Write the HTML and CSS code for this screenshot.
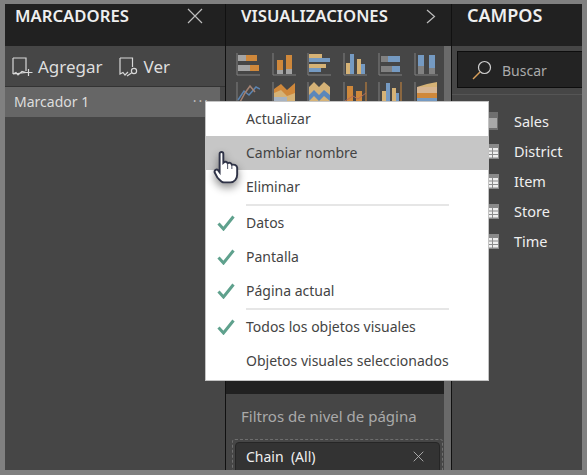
FILE: index.html
```html
<!DOCTYPE html>
<html>
<head>
    <meta charset="UTF-8">
    <title>Marcadores</title>
    <link rel="stylesheet" href="styles.css">
</head>
<body>
    <!-- shared icons -->
    <svg class="defs" width="0" height="0">
        <symbol id="check" viewBox="0 0 18 16">
            <path d="M1.5 8.5 L6.5 14 L16.5 1.5" fill="none" stroke="#5fa18d" stroke-width="3"/>
        </symbol>
        <symbol id="table" viewBox="0 0 12 15">
            <rect width="12" height="15" fill="#8a8a8a"/>
            <path d="M1 4h4v2.5H1zM6 4h5v2.5H6zM1 7.5h4V10H1zM6 7.5h5V10H6zM1 11h4v2.5H1zM6 11h5v2.5H6z" fill="#eee"/>
        </symbol>
        <symbol id="close" viewBox="0 0 16 16">
            <path d="M1 1 L15 15 M15 1 L1 15" fill="none" stroke="#bdbdbd" stroke-width="1.2"/>
        </symbol>
    </svg>

    <div class="frame">
        <!-- Marcadores -->
        <section class="panel marks">
            <header class="head">
                <h2>MARCADORES</h2>
                <svg class="head-close" width="16" height="16"><use href="#close"/></svg>
            </header>
            <div class="mark-tools">
                <span class="tool">
                    <svg width="21" height="20" viewBox="0 0 21 20"><path d="M1 1H14V14 M14 15.5 L10 14.5 L6 18 L4 15.5 L1 17Z M1 17V1 M16.5 12V19 M13 15.5H20.5" fill="none" stroke="#d8d8d8" stroke-width="1.2"/></svg>
                    Agregar
                </span>
                <span class="tool">
                    <svg width="20" height="20" viewBox="0 0 20 20"><path d="M1 1H13.5V10 M9 15 L6 18 L4 15.5 L1 17V1 M8 19 L12.5 16" fill="none" stroke="#d8d8d8" stroke-width="1.2"/><circle cx="15" cy="14" r="2.6" fill="none" stroke="#d8d8d8" stroke-width="1.2"/></svg>
                    Ver
                </span>
            </div>
            <div class="mark-row">
                <span>Marcador 1</span>
                <span class="dots">...</span>
            </div>
        </section>

        <!-- Visualizaciones -->
        <section class="panel viz">
            <header class="head">
                <h2>VISUALIZACIONES</h2>
                <svg class="head-chevron" width="10" height="15" viewBox="0 0 10 15"><path d="M1 1 L8.5 7.5 L1 14" fill="none" stroke="#bdbdbd" stroke-width="1.2"/></svg>
            </header>
            <div class="viz-body">
                <div class="viz-main">
                    <div class="viz-icons">
                        <svg viewBox="0 0 24 24"><path d="M1 1V23H24" fill="none" stroke="#8a8a8a"/><rect x="2" y="3" width="8" height="6" fill="#b5b5b5"/><rect x="10" y="3" width="11" height="6" fill="#e8943a"/><rect x="2" y="13" width="12" height="6" fill="#b5b5b5"/><rect x="14" y="13" width="9" height="6" fill="#e8943a"/></svg>
                        <svg viewBox="0 0 24 24"><path d="M1 1V23H24" fill="none" stroke="#8a8a8a"/><rect x="5" y="8" width="6" height="10" fill="#e8943a"/><rect x="5" y="18" width="6" height="4" fill="#b5b5b5"/><rect x="14" y="3" width="6" height="14" fill="#e8943a"/><rect x="14" y="17" width="6" height="5" fill="#b5b5b5"/></svg>
                        <svg viewBox="0 0 24 24"><path d="M1 1V23H24" fill="none" stroke="#8a8a8a"/><rect x="2" y="2" width="13" height="4" fill="#eec57f"/><rect x="2" y="6" width="21" height="4" fill="#7ea9d8"/><rect x="2" y="12" width="17" height="4" fill="#eec57f"/><rect x="2" y="16" width="12" height="4" fill="#7ea9d8"/></svg>
                        <svg viewBox="0 0 24 24"><path d="M1 1V23H24" fill="none" stroke="#8a8a8a"/><rect x="3" y="11" width="4" height="11" fill="#eec57f"/><rect x="7" y="2" width="4" height="20" fill="#7ea9d8"/><rect x="14" y="7" width="4" height="15" fill="#eec57f"/><rect x="18" y="12" width="4" height="10" fill="#7ea9d8"/></svg>
                        <svg viewBox="0 0 24 24"><path d="M1 1V23H24" fill="none" stroke="#8a8a8a"/><rect x="3" y="4" width="7" height="6" fill="#8c8c8c"/><rect x="10" y="4" width="12" height="6" fill="#7ea9d8"/><rect x="3" y="14" width="11" height="6" fill="#8c8c8c"/><rect x="14" y="14" width="8" height="6" fill="#7ea9d8"/></svg>
                        <svg viewBox="0 0 24 24"><path d="M1 1V23H24" fill="none" stroke="#8a8a8a"/><rect x="4" y="3" width="6" height="11" fill="#7ea9d8"/><rect x="4" y="14" width="6" height="8" fill="#8c8c8c"/><rect x="15" y="3" width="6" height="13" fill="#7ea9d8"/><rect x="15" y="16" width="6" height="6" fill="#8c8c8c"/></svg>

                        <svg viewBox="0 0 24 24"><path d="M1 1V23H24" fill="none" stroke="#8a8a8a"/><path d="M2 19 L8 10 L13 14 L20 6 L24 8" fill="none" stroke="#5f8fc4" stroke-width="1.5"/><path d="M3 23 L9 12 L14 5 L19 11" fill="none" stroke="#b58d7a" stroke-width="1.5"/></svg>
                        <svg viewBox="0 0 24 24"><path d="M1 1V23H24" fill="none" stroke="#8a8a8a"/><path d="M2 8 L9 3 L15 9 L23 2 V23 H2Z" fill="#e8943a"/><path d="M2 12 L9 9 L15 15 L23 12 V23 H2Z" fill="#eec57f"/><path d="M2 16 H15 V23 H2Z" fill="#b8c7d8"/></svg>
                        <svg viewBox="0 0 24 24"><path d="M1 1V23H24" fill="none" stroke="#8a8a8a"/><path d="M2 6 L7 1 L12 6 L17 1 L23 6 V23 H2Z" fill="#eec57f"/><path d="M2 14 L7 9 L12 14 L17 9 L23 14 V20 L17 15 L12 20 L7 15 L2 20Z" fill="#5f93cf"/></svg>
                        <svg viewBox="0 0 24 24"><path d="M1 1V23" fill="none" stroke="#8a8a8a"/><path d="M23 1V23" fill="none" stroke="#e8943a"/><rect x="4" y="5" width="6" height="18" fill="#e8943a"/><rect x="13" y="10" width="6" height="13" fill="#e8943a"/><path d="M2 20 L10 15 L15 18 L23 12" fill="none" stroke="#c8735a"/></svg>
                        <svg viewBox="0 0 24 24"><path d="M1 1V23" fill="none" stroke="#8a8a8a"/><path d="M23 1V23" fill="none" stroke="#e8943a"/><rect x="4" y="10" width="4" height="13" fill="#eec57f"/><rect x="8" y="2" width="4" height="21" fill="#7ea9d8"/><rect x="14" y="7" width="4" height="16" fill="#eec57f"/><rect x="18" y="12" width="3" height="11" fill="#7ea9d8"/></svg>
                        <svg viewBox="0 0 24 24"><path d="M1 1V23H24" fill="none" stroke="#8a8a8a"/><path d="M3 6 H23 V1 L13 3Z" fill="#eec57f"/><rect x="3" y="6" width="20" height="6" fill="#f1c9a0"/><rect x="3" y="12" width="20" height="5" fill="#e8943a"/><rect x="3" y="17" width="20" height="6" fill="#7ea9d8"/></svg>
                    </div>
                </div>
                <div class="viz-filters">
                    <div class="filters-title">Filtros de nivel de página</div>
                    <div class="filter-slot">
                        <div class="filter-card">
                            <span>Chain&nbsp; (All)</span>
                            <svg width="11" height="11"><use href="#close"/></svg>
                        </div>
                    </div>
                </div>
            </div>
        </section>

        <!-- Campos -->
        <section class="panel fields">
            <header class="head">
                <h2 class="campos">CAMPOS</h2>
            </header>
            <div class="search-wrap">
                <div class="search">
                    <svg width="20" height="20" viewBox="0 0 20 20"><circle cx="12.5" cy="7.5" r="6" fill="none" stroke="#cfcfcf" stroke-width="1.2"/><path d="M8 12 L1 19" stroke="#d9a05b" stroke-width="1.5"/></svg>
                    <span>Buscar</span>
                </div>
            </div>
            <ul class="field-list">
                <li>
                    <svg width="12" height="18" viewBox="0 0 12 18"><rect width="11" height="18" fill="#6f6f6f"/><rect x="1" y="6" width="9" height="10" fill="#a8a8a8"/></svg>
                    Sales
                </li>
                <li><svg width="12" height="15"><use href="#table"/></svg>District</li>
                <li><svg width="12" height="15"><use href="#table"/></svg>Item</li>
                <li><svg width="12" height="15"><use href="#table"/></svg>Store</li>
                <li><svg width="12" height="15"><use href="#table"/></svg>Time</li>
            </ul>
        </section>
    </div>

    <!-- context menu -->
    <div class="menu">
        <div class="menu-item"><span class="slot"></span>Actualizar</div>
        <div class="menu-item hover"><span class="slot"></span>Cambiar nombre</div>
        <div class="menu-item"><span class="slot"></span>Eliminar</div>
        <div class="menu-sep"></div>
        <div class="menu-item"><span class="slot"><svg width="18" height="16"><use href="#check"/></svg></span>Datos</div>
        <div class="menu-item"><span class="slot"><svg width="18" height="16"><use href="#check"/></svg></span>Pantalla</div>
        <div class="menu-item"><span class="slot"><svg width="18" height="16"><use href="#check"/></svg></span>Página actual</div>
        <div class="menu-sep"></div>
        <div class="menu-item"><span class="slot"><svg width="18" height="16"><use href="#check"/></svg></span>Todos los objetos visuales</div>
        <div class="menu-item"><span class="slot"></span>Objetos visuales seleccionados</div>
    </div>

    <!-- mouse pointer -->
    <svg class="hand" width="26" height="33" viewBox="0 0 24 31">
        <path d="M6 2.5 C6 .5 9.5 .5 9.5 2.5 V11 C11 9.5 13 10 13.5 11.5 C15 10.5 17 11 17.5 13 C19 12.5 22 13 22.5 15.5 L22.5 22 C22.5 26 20 29.5 16 29.5 L10 29.5 C7.5 29.5 6 27 4 25 L1.5 20.5 C.5 18.5 3 16.5 4.5 18 L6 20 Z" fill="#fff" stroke="#2f3347" stroke-width="1.8"/>
        <path d="M13.5 12 V17 M17.5 13.5 V17" stroke="#5c5f70" stroke-width="1"/>
    </svg>
</body>
</html>
```

FILE: styles.css
```css
* {
    box-sizing: border-box;
}
html, body {
    margin: 0;
    height: 100%;
    overflow: hidden;
}
body {
    background-color: #808080;
    font-family: "Noto Sans", sans-serif;
    position: relative;
}
.defs {
    display: block;
}
.frame {
    display: flex;
    height: 475px;
    padding: 4px 5px 5px 5px;
}
.panel {
    display: flex;
    flex-direction: column;
    background-color: #464646;
    overflow: hidden;
}
.marks {
    width: 221px;
    border-right: 1px solid #111;
}
.viz {
    width: 226px;
    border-right: 1px solid #111;
}
.fields {
    flex: 1;
}
.head {
    display: flex;
    justify-content: space-between;
    height: 42px;
    flex: none;
    background-color: #212121;
    color: #efefef;
    padding: 0 0 0 10px;
}
.head h2 {
    margin: 0;
    font-size: 16.7px;
    font-weight: 600;
    line-height: 23px;
}
.head h2.campos {
    font-size: 18px;
}
.marks .head-close {
    margin: 4px 22px 0 0;
}
.viz .head {
    padding-left: 15px;
}
.head-chevron {
    margin: 5px 15px 0 0;
}
.fields .head {
    padding-left: 15px;
}

/* marcadores */
.mark-tools {
    display: flex;
    gap: 16px;
    height: 41px;
    padding: 7px 0 0 7px;
    font-size: 17px;
    color: #dedede;
    border-bottom: 1px solid #333;
}
.tool {
    display: flex;
    align-items: center;
    gap: 5px;
    height: 27px;
}
.mark-row {
    display: flex;
    justify-content: space-between;
    width: 215px;
    height: 30px;
    line-height: 29px;
    padding: 0 10px 0 9px;
    background-color: #666;
    color: #ddd;
    font-size: 14px;
}
.dots {
    letter-spacing: 2px;
    line-height: 20px;
    color: #bbb;
}

/* visualizaciones */
.viz-body {
    flex: 1;
    display: flex;
    flex-direction: column;
    border-right: 7px solid #6a6a6a;
    overflow: hidden;
}
.viz-main {
    height: 348px;
    flex: none;
    background: linear-gradient(#464646 55px, #212121 55px);
}
.viz-icons {
    display: grid;
    grid-template-columns: repeat(6, 24px);
    grid-auto-rows: 24px;
    column-gap: 11.5px;
    row-gap: 5px;
    padding: 6px 0 0 10px;
}
.viz-icons svg {
    width: 24px;
    height: 24px;
    opacity: .85;
}
.viz-filters {
    flex: 1;
    padding: 12px 1px 0 6px;
}
.filters-title {
    font-size: 15px;
    line-height: 20px;
    color: #aaa;
    padding-left: 9px;
}
.filter-slot {
    margin-top: 13px;
    padding: 2px 2px 0 2px;
    height: 60px;
    border: 1px dashed #6e6e6e;
    border-radius: 3px;
}
.filter-card {
    display: flex;
    justify-content: space-between;
    height: 60px;
    background-color: #333;
    border: 1px solid #262626;
    border-radius: 4px;
    padding: 4px 15px 0 10px;
    font-size: 14px;
    color: #efefef;
}
.filter-card svg {
    margin-top: 4px;
}

/* campos */
.search-wrap {
    height: 49px;
    padding: 5px 0 0 5px;
    border-bottom: 1px solid #555;
}
.search {
    display: flex;
    align-items: center;
    gap: 10px;
    height: 37px;
    padding-left: 14px;
    background-color: #232323;
    border: 1px solid #0d0d0d;
    border-right: 0;
    font-size: 14px;
    color: #aaa;
}
.search span {
    padding-top: 2px;
}
.field-list {
    list-style: none;
    margin: 0;
    padding: 11px 0 0 0;
}
.field-list li {
    display: flex;
    align-items: center;
    gap: 15px;
    height: 30px;
    padding-left: 35px;
    font-size: 14.5px;
    color: #efefef;
}

/* menu */
.menu {
    position: absolute;
    left: 205px;
    top: 101px;
    width: 284px;
    height: 280px;
    background-color: #fff;
    border: 1px solid #c4c4c4;
    color: #444;
    font-size: 14px;
}
.menu-item {
    display: flex;
    align-items: center;
    height: 34px;
    padding-bottom: 2px;
}
.menu-item.hover {
    background-color: #c6c6c6;
}
.slot {
    display: flex;
    justify-content: center;
    align-items: center;
    width: 40px;
    margin-top: 2px;
    padding-right: 1px;
    flex: none;
}
.menu-sep {
    height: 2px;
    margin-left: 40px;
    width: 203px;
    background-color: #e6e6e6;
}
.hand {
    position: absolute;
    left: 213px;
    top: 151px;
    filter: drop-shadow(0 4px 4px rgba(0, 0, 0, .45));
}
```
